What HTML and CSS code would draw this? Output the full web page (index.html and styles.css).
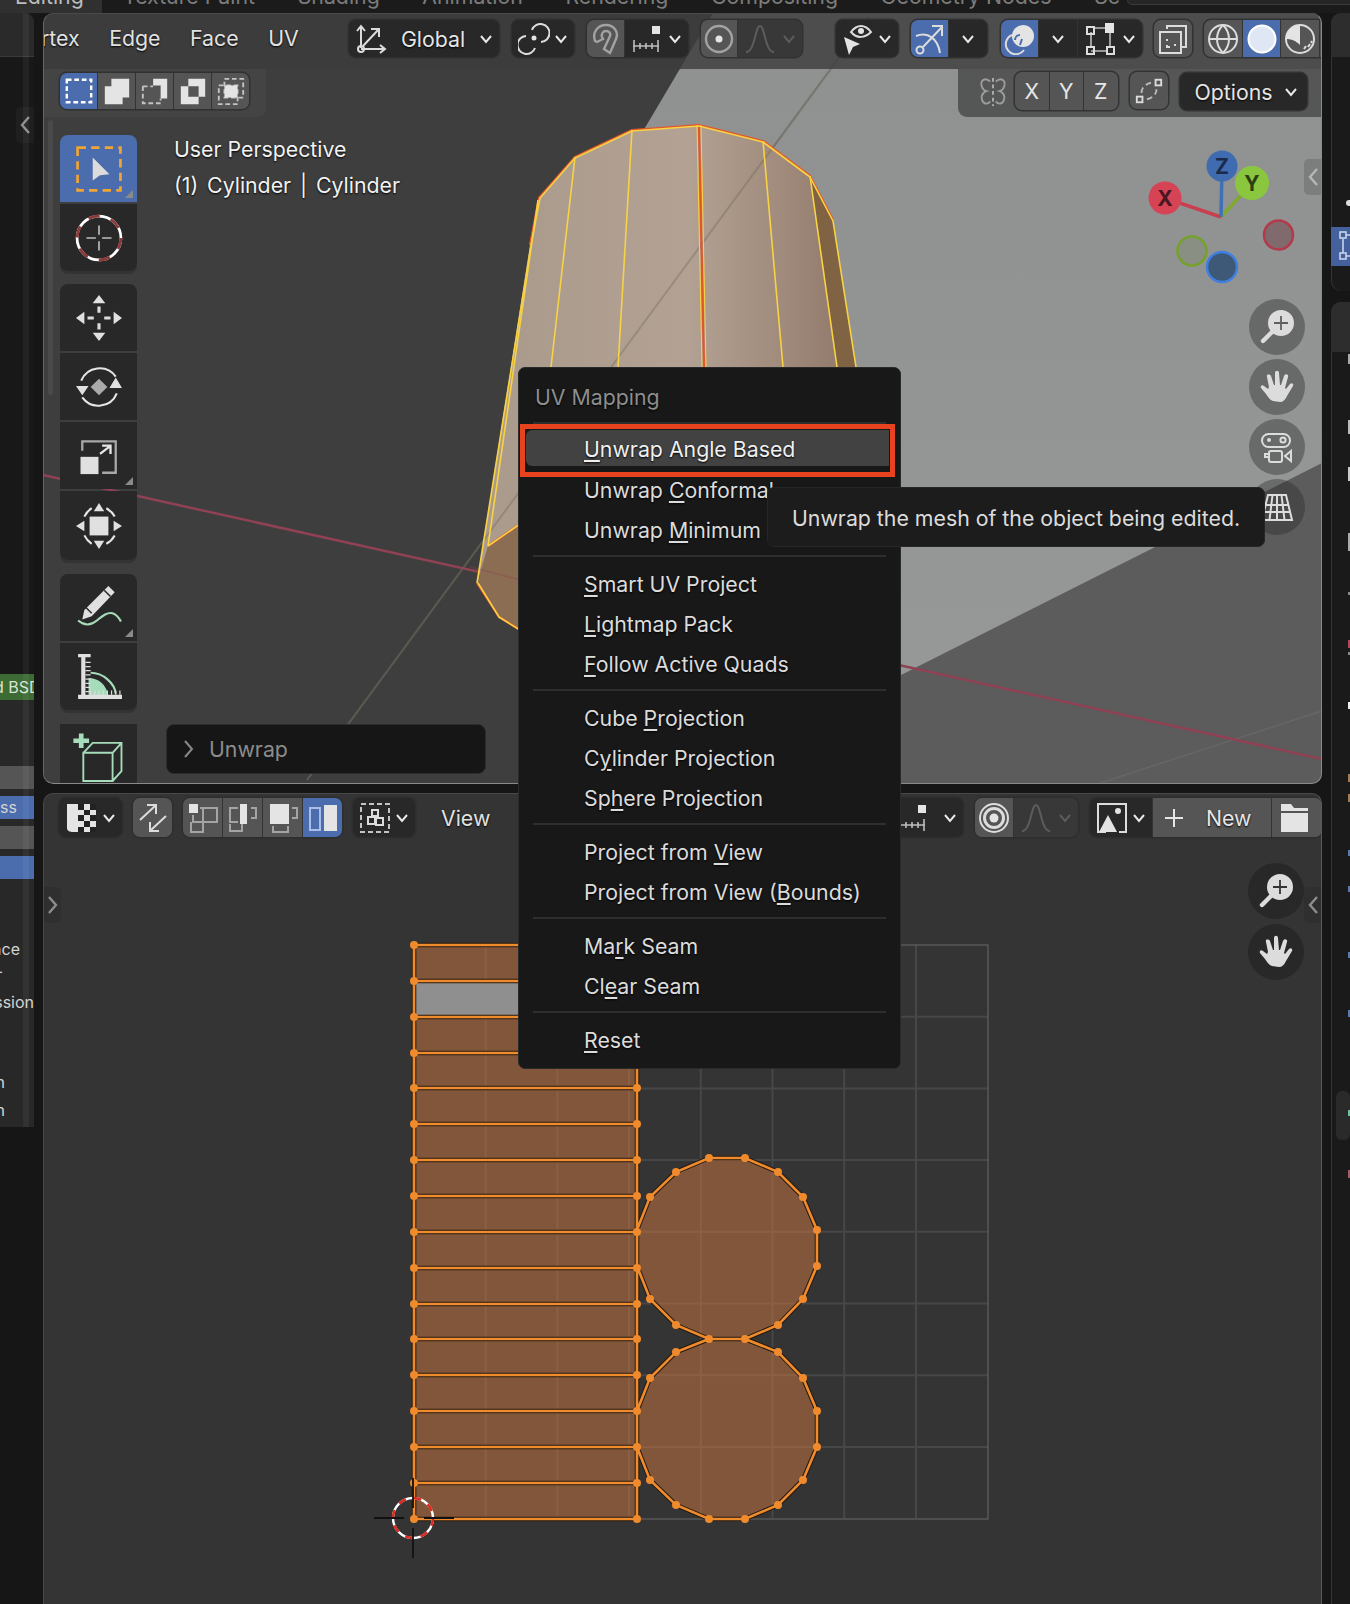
FILE: index.html
```html
<!DOCTYPE html>
<html lang="en">
<head>
<meta charset="utf-8">
<title>UV Mapping</title>
<link rel="stylesheet" href="styles.css">
</head>
<body>
<div class="tabs">
  <span class="tab on">Editing</span><span class="tab">Texture Paint</span><span class="tab">Shading</span><span class="tab">Animation</span><span class="tab">Rendering</span><span class="tab">Compositing</span><span class="tab">Geometry Nodes</span><span class="tab">Sc</span>
  <span class="scene-box"></span>
</div>
<div class="main">
  <aside class="lpanel">
    <div class="lp-head"></div>
    <div class="lp-arrow"><svg class="chev-big" viewBox="0 0 12 20"><path d="M10 2 3 10l7 8"/></svg></div>
    <div class="lp-node">d BSDF</div>
    <div class="lp-body">
      <div class="lp-row grey"></div>
      <div class="lp-row blue">ss</div>
      <div class="lp-row grey"></div>
      <div class="lp-row blue"></div>
      <div class="lp-txt t1">ace</div>
      <div class="lp-txt t2">-</div>
      <div class="lp-txt t3">ssion</div>
      <div class="lp-txt t4">n</div>
      <div class="lp-txt t5">n</div>
    </div>
    <div class="lp-scroll"></div>
  </aside>

  <div class="center">
    <section class="view3d">
      <svg class="scene" viewBox="43 13 1279 771" aria-hidden="true">
        <defs>
          <linearGradient id="plane" x1="0" y1="0" x2="0" y2="1"><stop offset="0" stop-color="#8f9191"/><stop offset="1" stop-color="#989a9a"/></linearGradient>
          <linearGradient id="body" gradientUnits="userSpaceOnUse" x1="520" y1="0" x2="850" y2="0"><stop offset="0" stop-color="#ab9b8d"/><stop offset=".5" stop-color="#b3a294"/><stop offset=".78" stop-color="#a18c7d"/><stop offset="1" stop-color="#90786a"/></linearGradient>
        </defs>
        <polygon points="530,322 530,784 1322,784 1322,460 1000,460" fill="#5c5c5c"/>
        <polygon points="713,13 1322,13 1322,463 901,675 530,860 530,322" fill="url(#plane)"/>
        <path d="M1322 711 1097 784" stroke="#666" stroke-width="1.5" fill="none"/>
        <path d="M869 17 307 780" stroke="#6a6a66" stroke-opacity=".48" stroke-width="2" fill="none"/>
        <path d="M43 475 1322 759" stroke="#8f4253" stroke-width="2.5" fill="none"/>
        <polygon points="530,245 539,198 575,157 632,130 699,125 763,141 810,176 833,220 856,367 880,560 518,629 499,617 477,583" fill="url(#body)"/>
        <path d="M869 17 307 780" stroke="#6a6450" stroke-opacity=".35" stroke-width="2" fill="none"/>
        <polygon points="810,176 833,220 856,367 880,560 850,560 837,367" fill="#7f6342"/>
        <polygon points="477,583 488,546 540,510 540,640 518,629 499,617" fill="#8a6d52"/>
        <path d="M470 567 540 585" stroke="#8f4253" stroke-opacity=".35" stroke-width="1.5" fill="none"/>
        <g fill="none" stroke="#e2562c" stroke-width="2.2" stroke-linejoin="round">
          <path d="M530 245 539 198 575 157 632 130 699 125 763 141 810 176 833 220"/>
          <path d="M477 583 499 617 520 630M488 546 520 524"/>
          <path d="M699 125 704 367"/>
        </g>
        <g fill="none" stroke="#f8d244" stroke-width="1.6" stroke-linejoin="round">
          <path d="M477 583 531 245 540 198 575 158 632 131 699 126 763 142 810 177 833 221 856 367"/>
          <path d="M478 583 499 617 520 630M488 546 520 524"/>
          <path d="M575 157 551 367M632 130 618 367M763 141 783 367M810 176 837 367M538 200 488 546"/>
          <path d="M697 125 702 367M701 125 706 367" stroke-width="1"/>
        </g>
        <g fill="none" stroke-width="3.5">
          <path d="M1221 217 1165 198" stroke="#c8404f"/>
          <path d="M1221 217 1252 183" stroke="#7fa92f"/>
          <path d="M1221 217 1222 166" stroke="#3f70b8"/>
        </g>
        <circle cx="1278.5" cy="235" r="14.5" fill="#806a6e" stroke="#b23a4a" stroke-width="2.5"/>
        <circle cx="1192" cy="251" r="14.5" fill="#8a8f83" stroke="#76a02c" stroke-width="2.5"/>
        <circle cx="1222" cy="267" r="15" fill="#3e5878" stroke="#3f7fe0" stroke-width="2.5"/>
        <circle cx="1222" cy="166" r="15.5" fill="#3f6cb0"/>
        <circle cx="1252" cy="183" r="17" fill="#8bc63f"/>
        <circle cx="1165" cy="198" r="16.5" fill="#d64355"/>
        <g class="axis">
          <text x="1222" y="174" fill="#1b2a48">Z</text>
          <text x="1252" y="191" fill="#2c3f10">Y</text>
          <text x="1165" y="206" fill="#4b1620">X</text>
        </g>
      </svg>

      <header class="hdr">
        <nav class="menus"><span>rtex</span><span>Edge</span><span>Face</span><span>UV</span></nav>
        <div class="grp w150 dark spread">
          <svg class="ic" viewBox="0 0 32 32"><path d="M6 25V4M2 8l4-5 4 5M6 26h23M25 22l5 4-5 4M8 23 24 6M16 6h8v8"/><circle cx="6" cy="26" r="3"/></svg>
          <span class="lbl">Global</span>
          <svg class="chev" viewBox="0 0 14 14"><path d="m2 4 5 6 5-6"/></svg>
        </div>
        <div class="grp w62 dark spread m13">
          <svg class="ic" viewBox="0 0 32 32"><path d="M14 7a9 9 0 1 1 9 12M17 25A9 9 0 1 1 8 13"/><circle class="fillw" cx="16" cy="15" r="2.5"/></svg>
          <svg class="chev" viewBox="0 0 14 14"><path d="m2 4 5 6 5-6"/></svg>
        </div>
        <div class="grp m13">
          <div class="cell grey w37"><svg class="ic mute" viewBox="0 0 32 32"><path d="M5 18C2 9 8 2 16 2c8 0 13 7 10 14l-6 14-6-4 6-13c1-3-1-5-4-5s-5 3-4 6l1 2-6 3z"/></svg></div>
          <div class="cell dark w63 spread1">
            <svg class="ic" viewBox="0 0 32 32"><path class="thin" d="M2 23h26M3 17v12M9 20v6M15 20v6M21 20v6M27 17v12"/><rect class="fillw" x="21" y="3" width="8" height="8"/></svg>
            <svg class="chev" viewBox="0 0 14 14"><path d="m2 4 5 6 5-6"/></svg>
          </div>
        </div>
        <div class="grp m13">
          <div class="cell grey w36"><svg class="ic mute" viewBox="0 0 32 32"><circle cx="16" cy="16" r="13"/><circle class="fillw" cx="16" cy="16" r="3.5"/></svg></div>
          <div class="cell dim w64 spread1">
            <svg class="ic off" viewBox="0 0 32 32"><path d="M2 29c9 0 9-26 14-26s5 26 14 26"/></svg>
            <svg class="chev off" viewBox="0 0 14 14"><path d="m2 4 5 6 5-6"/></svg>
          </div>
        </div>
        <div class="grp w62 dark spread m34">
          <svg class="ic" viewBox="0 0 32 32"><path class="fillw" d="M2 14l16 7-7 3-4 8z"/><path d="M9 9c6-8 14-8 20 0-6 6-14 7-20 0z"/><circle class="fillw" cx="19" cy="8" r="3"/></svg>
          <svg class="chev" viewBox="0 0 14 14"><path d="m2 4 5 6 5-6"/></svg>
        </div>
        <div class="grp m13">
          <div class="cell blue w37"><svg class="ic" viewBox="0 0 32 32"><path d="M2 13C14 8 24 16 26 30M9 24 28 4M18 3h10v10"/><circle cx="6" cy="27" r="3.5"/></svg></div>
          <div class="cell dark w38"><svg class="chev" viewBox="0 0 14 14"><path d="m2 4 5 6 5-6"/></svg></div>
        </div>
        <div class="grp m14">
          <div class="cell blue w37"><svg class="ic" viewBox="0 0 32 32"><circle class="fillw" cx="19" cy="13" r="11"/><path d="M20 27A10 10 0 1 1 8 12"/><path class="cut" d="M11 17a5 5 0 0 1 5-5M16 22l2-6"/></svg></div>
          <div class="cell dark w38"><svg class="chev" viewBox="0 0 14 14"><path d="m2 4 5 6 5-6"/></svg></div>
          <div class="cell dark w64 spread1">
            <svg class="ic" viewBox="0 0 32 32"><path class="thin" d="M7 9v15M11 5h11M7 28h15M26 9v15" /><rect x="3" y="4" width="7" height="7"/><rect x="3" y="24" width="7" height="7"/><rect x="23" y="24" width="7" height="7"/><rect class="fillw" x="21" y="0" width="9" height="10"/></svg>
            <svg class="chev" viewBox="0 0 14 14"><path d="m2 4 5 6 5-6"/></svg>
          </div>
        </div>
        <div class="grp m12">
          <div class="cell grey w38"><svg class="ic" viewBox="0 0 32 32"><path d="M10 6V3h19v21h-5"/><rect x="3" y="9" width="21" height="21"/><path class="cut2" d="M10 16v2M10 22v2h3M17 22h2"/></svg></div>
        </div>
        <div class="grp m12 tail">
          <div class="cell grey w38"><svg class="ic" viewBox="0 0 32 32"><circle cx="16" cy="16" r="14"/><path d="M2 16h28M16 2c-8 8-8 20 0 28M16 2c8 8 8 20 0 28"/></svg></div>
          <div class="cell blue w37"><svg class="ic" viewBox="0 0 32 32"><circle cx="16" cy="16" r="13.5" fill="#dfe6f4" stroke="#fff"/></svg></div>
          <div class="cell grey w38"><svg class="ic" viewBox="0 0 32 32"><circle cx="16" cy="16" r="14"/><path class="fillw" d="M16 2a14 14 0 0 0-14 14c6 0 10 2 14 6z"/><path d="M20 26l2-3M24 24l2-3M27 20l1-2"/></svg></div>
          <div class="cell grey w5"></div>
        </div>
      </header>

      <div class="toolrow">
        <div class="strip-l">
          <div class="grp">
            <div class="cell blue w37 h36"><svg class="ic sm" viewBox="0 0 32 32"><rect class="dash" x="3" y="4" width="26" height="24"/></svg></div>
            <div class="cell grey w37 h36"><svg class="ic sm" viewBox="0 0 32 32"><path class="fillw" d="M10 3h19v20h-7v7H3V11h7z"/></svg></div>
            <div class="cell grey w37 h36"><svg class="ic sm" viewBox="0 0 32 32"><path class="fillw" d="M14 3h15v21H22V10h-8z"/><path class="dashg" d="M3 11h11M3 11v18h19v-5"/></svg></div>
            <div class="cell grey w37 h36"><svg class="ic sm" viewBox="0 0 32 32"><path class="fillw" fill-rule="evenodd" d="M11 3h18v19h-7v8H3V11h8zM11 11v11h11V11z"/></svg></div>
            <div class="cell grey w37 h36"><svg class="ic sm" viewBox="0 0 32 32"><rect class="dashg" x="9" y="3" width="20" height="20"/><rect class="dashg" x="3" y="10" width="20" height="20"/><rect class="fillw" x="9" y="10" width="14" height="13"/></svg></div>
          </div>
        </div>
        <div class="strip-r">
          <svg class="ic mirror" viewBox="0 0 32 32"><path class="mute-s" d="M13 5C8 0 2 3 4 10c1 4 5 5 5 5s-6 2-5 8 6 7 9 3M19 5c5-5 11-2 9 5-1 4-5 5-5 5s6 2 5 8-6 7-9 3"/><path class="dashv" d="M16 1v30"/></svg>
          <div class="grp xyz"><div class="cell grey w34">X</div><div class="cell grey w34">Y</div><div class="cell grey w34">Z</div></div>
          <div class="grp m12"><div class="cell grey w38 h37"><svg class="ic sm" viewBox="0 0 32 32"><rect x="3" y="22" width="6" height="6"/><rect x="23" y="4" width="6" height="6"/><path class="dasht" d="M8 18c0-6 5-10 11-11M24 14c0 6-5 10-11 11"/></svg></div></div>
          <div class="grp dark opts m12"><span class="lbl">Options</span><svg class="chev" viewBox="0 0 14 14"><path d="m2 4 5 6 5-6"/></svg></div>
        </div>
      </div>

      <div class="vbody">
        <div class="toolbar">
          <div class="tgroup">
            <div class="tool on corner"><svg class="tic" viewBox="0 0 44 44"><rect x="1.5" y="1.5" width="41" height="41" fill="none" stroke="#f0a533" stroke-width="2.6" stroke-dasharray="8 5"/><path d="M16 11 32 27l-9 1-7 5z" fill="#dcdcdc"/></svg></div>
            <div class="tool"><svg class="tic" viewBox="0 0 44 44"><circle cx="22" cy="22" r="21" fill="none" stroke="#fff" stroke-width="2.6"/><circle cx="22" cy="22" r="21" fill="none" stroke="#8a3a3a" stroke-width="2.8" stroke-dasharray="11 11"/><path d="M22 10v9M22 25v9M10 22h9M25 22h9" stroke="#bdbdbd" stroke-width="1.6"/></svg></div>
          </div>
          <div class="tgroup">
            <div class="tool"><svg class="tic" viewBox="0 0 44 44"><path class="f" d="M22 0l-6 8h12zM22 44l-6-8h12zM0 22l8-6v12zM44 22l-8-6v12z"/><path d="M22 11v6M22 27v6M11 22h6M27 22h6" stroke="#dcdcdc" stroke-width="3"/></svg></div>
            <div class="tool"><svg class="tic" viewBox="0 0 44 44"><path d="M5 16A19 19 0 0 1 38 12M39 28A19 19 0 0 1 6 32" fill="none" stroke="#e6e6e6" stroke-width="2"/><path class="f" d="M0 21h12l-6 9zM44 23H32l6-10z"/><path d="M22 14l8 8-8 8-8-8z" fill="#aaa"/></svg></div>
            <div class="tool corner"><svg class="tic" viewBox="0 0 44 44"><path d="M6 17V8h32v30H25" fill="none" stroke="#a8a8a8" stroke-width="2.2"/><rect class="f" x="4.300" y="22.800" width="17.200" height="16.500"/><path d="M23 20 32 13M25 12h8v8" fill="none" stroke="#e6e6e6" stroke-width="2.2"/></svg></div>
            <div class="tool tall"><svg class="tic" viewBox="0 0 44 44"><path d="M8 13A20 20 0 0 1 15 5M29 5a20 20 0 0 1 8 8M37 31a20 20 0 0 1-8 8M15 39a20 20 0 0 1-7-8" fill="none" stroke="#e6e6e6" stroke-width="2"/><path class="f" d="M22 0l-5 8h10zM22 44l-5-8h10zM0 22l8-5v10zM44 22l-8-5v10z"/><rect class="f" x="13" y="13" width="18" height="18"/></svg></div>
          </div>
          <div class="tgroup">
            <div class="tool corner"><svg class="tic" viewBox="0 0 44 44"><path class="f" d="M31 1l6 6-22 23-9 3 2-9z"/><path d="M27 5l6 6M9 21l6 6" stroke="#282828" stroke-width="1.4" fill="none"/><path d="M2 34c6 5 12 5 18 0 6-5 10-8 15-7 3 1 6 4 8 8" fill="none" stroke="#a6dcb8" stroke-width="2"/></svg></div>
            <div class="tool"><svg class="tic" viewBox="0 0 44 44"><path d="M12 23c9 0 17 6 19 17H12z" fill="#a5dcb9"/><path d="M14 18c12 0 23 10 24 20" fill="none" stroke="#a5dcb9" stroke-width="2"/><path class="f" d="M2 0h12v3H9v36h35v4H2v-4h3V3H2z"/><path d="M9 8h5M9 12h5M9 16h5M9 20h5M9 24h5M9 28h5M9 32h5M9 36h5M14 39v-4M18 39v-4M22 39v-4M26 39v-4M30 39v-4M34 39v-4M38 39v-4M42 39v-4" stroke="#dcdcdc" stroke-width="1.2"/></svg></div>
          </div>
          <div class="tgroup">
            <div class="tool"><svg class="tic" viewBox="0 0 44 44"><path d="M-2.500 5.500h15M5 -1.500v14" stroke="#a5dcb9" stroke-width="4.500"/><path d="M7 17h28v27H7zM7 17l9-9.500h27.500v27L35 44M35 17l8.500-9.500" fill="none" stroke="#a5dcb9" stroke-width="1.800"/></svg></div>
          </div>
        </div>
        <div class="vinfo">
          <div class="info">User Perspective</div>
          <div class="info wide">(1) Cylinder | Cylinder</div>
          <div class="lastop"><svg class="chev-r" viewBox="0 0 12 20"><path d="M3 2l7 8-7 8"/></svg><span>Unwrap</span></div>
        </div>
      </div>

      <div class="vscroll"></div>
      <div class="side-tab light"><svg class="chev-big" viewBox="0 0 12 20"><path d="M10 2 3 10l7 8"/></svg></div>
      <div class="navs">
        <div class="nav"><svg class="nic" viewBox="0 0 34 34"><circle class="nf" cx="21" cy="13" r="13"/><path d="M21 6v14M14 13h14" stroke="#5f6060" stroke-width="1.8"/><path d="M12 22 3 31" stroke="#dcdcdc" stroke-width="4.4" stroke-linecap="round"/></svg></div>
        <div class="nav"><svg class="nic" viewBox="0 0 34 34"><use href="#handicon"/></svg></div>
        <div class="nav"><svg class="nic" viewBox="0 0 34 34"><g fill="none" stroke="#dcdcdc" stroke-width="2"><rect x="2" y="4" width="28" height="13" rx="6.5"/><rect x="9" y="21" width="13" height="11" rx="2"/><path d="M9 24H5v3h4M31 21l-6 5 6 5z"/></g><circle cx="9" cy="10" r="2" fill="#dcdcdc"/><circle cx="23" cy="10" r="2.6" fill="none" stroke="#dcdcdc" stroke-width="2"/></svg></div>
        <div class="nav"><svg class="nic" viewBox="0 0 34 34"><path d="M8 5h18l6 25H2zM17 5v25M12.500 5 9.500 30M21.500 5 24.500 30M5.500 15h23M4 22h26" fill="none" stroke="#dcdcdc" stroke-width="2"/></svg></div>
      </div>
    </section>

    <section class="uv">
      <svg class="uvcanvas" viewBox="43 793 1279 811" aria-hidden="true">
        <defs>
          <path id="uvedges" d="M414 945V1519M637 945V1519M414 945H637M414 981H637M414 1017H637M414 1053H637M414 1088H637M414 1124H637M414 1160H637M414 1196H637M414 1232H637M414 1268H637M414 1304H637M414 1339H637M414 1375H637M414 1411H637M414 1447H637M414 1483H637M414 1519H637M709 1158H745L778 1172 803 1197 817 1230V1266L803 1299 778 1325 745 1339H709L676 1325 650 1299 637 1266V1230L650 1197 676 1172zM745 1339 778 1352 803 1378 817 1411V1447L803 1480 778 1505 745 1519H709L676 1505 650 1480 637 1447V1411L650 1378 676 1352 709 1339"/>
        </defs>
        <g stroke="#474747" stroke-width="2" fill="none">
          <path d="M485.700 945V1518M557.400 945V1518M629 945V1518M700.800 945V1518M772.500 945V1518M844.200 945V1518M916 945V1518M414 1016.700H988M414 1088.400H988M414 1160H988M414 1231.800H988M414 1303.500H988M414 1375.200H988M414 1447H988"/>
        </g>
        <rect x="414" y="945" width="574" height="574" fill="none" stroke="#686868" stroke-width="1"/>
        <path class="uvface" d="M414 945H637V1519H414z"/>
        <path class="uvface" d="M709 1158H745L778 1172 803 1197 817 1230V1266L803 1299 778 1325 745 1339H709L676 1325 650 1299 637 1266V1230L650 1197 676 1172z"/>
        <path class="uvface" d="M745 1339 778 1352 803 1378 817 1411V1447L803 1480 778 1505 745 1519H709L676 1505 650 1480 637 1447V1411L650 1378 676 1352 709 1339z"/>
        <rect x="414" y="981" width="223" height="36" fill="#8f8f8f"/>
        <use href="#uvedges" class="edge-dark"/>
        <use href="#uvedges" class="edge-orange"/>
        <path class="uvverts" d="M414 945h0M414 981h0M414 1017h0M414 1053h0M414 1088h0M414 1124h0M414 1160h0M414 1196h0M414 1232h0M414 1268h0M414 1304h0M414 1339h0M414 1375h0M414 1411h0M414 1447h0M414 1483h0M414 1519h0M637 945h0M637 981h0M637 1017h0M637 1053h0M637 1088h0M637 1124h0M637 1160h0M637 1196h0M637 1232h0M637 1268h0M637 1304h0M637 1339h0M637 1375h0M637 1411h0M637 1447h0M637 1483h0M637 1519h0M709 1158h0M745 1158h0M778 1172h0M803 1197h0M817 1230h0M817 1266h0M803 1299h0M778 1325h0M745 1339h0M709 1339h0M676 1325h0M650 1299h0M650 1197h0M676 1172h0M778 1352h0M803 1378h0M817 1411h0M817 1447h0M803 1480h0M778 1505h0M745 1519h0M709 1519h0M676 1505h0M650 1480h0M650 1378h0M676 1352h0"/>
        <circle cx="413" cy="1518" r="20" fill="none" stroke="#fff" stroke-width="2.400"/>
        <circle cx="413" cy="1518" r="20" fill="none" stroke="#dc2a22" stroke-width="2.600" stroke-dasharray="7.850 7.850"/>
        <path d="M374 1518H404M424 1518H454M413 1478V1508M413 1528V1558" stroke="#111" stroke-width="1.800" fill="none"/>
      </svg>

      <header class="hdr uvhdr">
        <div class="grp w63 dark spread">
          <svg class="ic" viewBox="0 0 32 32"><path class="fillw" d="M2 2h29v28H8c-3 0-6-1-6-4z"/><path d="M13 2h6v6h-6zM25 2h6v6h-6zM19 8h6v5h-6zM13 13h6v6h-6zM25 13h6v6h-6zM19 19h6v6h-6zM13 25h6v5h-6zM25 25h6v5h-6z" fill="#222" stroke="none"/></svg>
          <svg class="chev" viewBox="0 0 14 14"><path d="m2 4 5 6 5-6"/></svg>
        </div>
        <div class="grp m11"><div class="cell grey w39 h39"><svg class="ic" viewBox="0 0 32 32"><path d="M3 18 18 4M10 3h9v9M29 14 14 28M22 29h-9v-9"/></svg></div></div>
        <div class="grp m11 modes">
          <div class="cell grey w39 h39"><svg class="ic" viewBox="0 0 32 32"><rect class="fillw" x="2" y="2" width="9" height="9"/><path class="thinm" d="M13 6h17v14H6V13M16 6v24H4V20"/></svg></div>
          <div class="cell grey w39 h39"><svg class="ic" viewBox="0 0 32 32"><rect class="fillw" x="13" y="2" width="7" height="20"/><path class="thinm" d="M11 6H3v14h8M24 6h5v10h-5M3 22v7h12v-7"/></svg></div>
          <div class="cell grey w39 h39"><svg class="ic" viewBox="0 0 32 32"><rect class="fillw" x="3" y="2" width="19" height="20"/><path class="thinm" d="M25 6h5v10h-5M6 24v6h15v-6"/></svg></div>
          <div class="cell blue w39 h39"><svg class="ic" viewBox="0 0 32 32"><rect x="3" y="6" width="10" height="22" class="blueline"/><rect class="fillw" x="17" y="3" width="13" height="26"/></svg></div>
        </div>
        <div class="grp w62 dark spread m11">
          <svg class="ic" viewBox="0 0 32 32"><rect class="dashg" x="2" y="2" width="28" height="28"/><rect x="13" y="8" width="6" height="6"/><rect x="9" y="15" width="7" height="7"/><rect x="17" y="16" width="7" height="7"/></svg>
          <svg class="chev" viewBox="0 0 14 14"><path d="m2 4 5 6 5-6"/></svg>
        </div>
        <span class="uvview">View</span>
        <div class="uvright">
          <div class="grp dark w83 spreadr">
            <svg class="ic" viewBox="0 0 32 32"><path class="thin" d="M2 23h26M3 17v12M9 20v6M15 20v6M21 20v6M27 17v12"/><rect class="fillw" x="21" y="3" width="8" height="8"/></svg>
            <svg class="chev" viewBox="0 0 14 14"><path d="m2 4 5 6 5-6"/></svg>
          </div>
          <div class="grp m12">
            <div class="cell grey w38 h39"><svg class="ic" viewBox="0 0 32 32"><circle cx="16" cy="16" r="14"/><circle cx="16" cy="16" r="9.500" stroke-width="3"/><circle class="fillm" cx="16" cy="16" r="4.500"/></svg></div>
            <div class="cell dim w64 h39 spread1">
              <svg class="ic off" viewBox="0 0 32 32"><path d="M2 29c9 0 9-26 14-26s5 26 14 26"/></svg>
              <svg class="chev off" viewBox="0 0 14 14"><path d="m2 4 5 6 5-6"/></svg>
            </div>
          </div>
          <div class="grp m12">
            <div class="cell dark w62 h39 spread1">
              <svg class="ic" viewBox="0 0 32 32"><path d="M10 30H2V2h28v28h-7"/><path class="fillw" d="M3 30 12 13l9 17z"/><circle class="fillw" cx="22" cy="9" r="3"/></svg>
              <svg class="chev" viewBox="0 0 14 14"><path d="m2 4 5 6 5-6"/></svg>
            </div>
            <div class="cell grey newb h39"><svg class="plus" viewBox="0 0 20 20"><path d="M10 1v18M1 10h18"/></svg><span class="lbl">New</span></div>
            <div class="cell grey w50 h39"><svg class="ic" viewBox="0 0 32 32"><path class="fillw" d="M3 2h10l3 4h14v3H3zM3 11h27v19H3z"/></svg></div>
          </div>
        </div>
      </header>

      <div class="side-tab uvl"><svg class="chev-big" viewBox="0 0 12 20"><path d="M3 2l7 8-7 8"/></svg></div>
      <div class="side-tab uvr"><svg class="chev-big" viewBox="0 0 12 20"><path d="M10 2 3 10l7 8"/></svg></div>
      <div class="navs uvnavs">
        <div class="nav"><svg class="nic" viewBox="0 0 34 34"><circle class="nf" cx="21" cy="13" r="13"/><path d="M21 6v14M14 13h14" stroke="#333" stroke-width="1.8"/><path d="M12 22 3 31" stroke="#dcdcdc" stroke-width="4.400" stroke-linecap="round"/></svg></div>
        <div class="nav"><svg class="nic" viewBox="0 0 34 34"><use href="#handicon"/></svg></div>
      </div>
    </section>
  </div>

  <aside class="rpanel">
    <div class="rp-top">
      <div class="rp-head"></div>
      <div class="rp-dot"></div>
      <div class="rp-sel"><svg class="rp-ic" viewBox="0 0 19 30"><path d="M5 8v14M8 4h10M8 25h10" stroke="#c9d4ea" stroke-width="1.6" fill="none"/><rect x="2" y="1" width="6" height="6" fill="none" stroke="#c9d4ea" stroke-width="1.6"/><rect x="2" y="22" width="6" height="6" fill="none" stroke="#c9d4ea" stroke-width="1.6"/></svg></div>
    </div>
    <div class="rp-bottom">
      <div class="rp-head tall"></div>
      <svg class="rp-marks" viewBox="0 0 19 1252" aria-hidden="true">
        <g>
          <rect x="17" y="52" width="2" height="10" fill="#aaa"/>
          <rect x="17" y="118" width="2" height="14" fill="#bbb"/>
          <rect x="17" y="165" width="2" height="14" fill="#ccc"/>
          <rect x="17" y="231" width="2" height="18" fill="#aaa"/>
          <rect x="17" y="290" width="2" height="3" fill="#888"/>
          <rect x="17" y="338" width="2" height="8" fill="#b0485a"/>
          <rect x="17" y="350" width="2" height="3" fill="#888"/>
          <rect x="17" y="400" width="2" height="7" fill="#eee"/>
          <rect x="17" y="472" width="2" height="8" fill="#a07c58"/>
          <rect x="17" y="492" width="2" height="8" fill="#a07c58"/>
          <rect x="17" y="548" width="2" height="6" fill="#5f78b0"/>
          <rect x="17" y="584" width="2" height="6" fill="#5f78b0"/>
          <rect x="17" y="650" width="2" height="6" fill="#5f78b0"/>
          <rect x="17" y="708" width="2" height="7" fill="#5f78b0"/>
          <rect x="5" y="789" width="14" height="49" rx="6" fill="#2a2a2a"/>
          <rect x="17" y="808" width="2" height="6" fill="#6fc39a"/>
          <rect x="17" y="868" width="2" height="8" fill="#a85a6a"/>
        </g>
      </svg>
    </div>
  </aside>
</div>

<svg class="sprite" aria-hidden="true"><defs><g id="handicon"><path d="M13 31c-3-1-5-4-7-7l-5-6c-1-2 1-4 3-2l4 3 1-2L7 7c-1-3 3-3 4-1l3 9 1 0L15 3c0-3 4-3 4 0l1 12h1l3-9c1-3 5-2 4 1l-3 11 1 1 4-5c2-2 4 0 3 2l-6 10c-2 4-4 6-7 6z" fill="#dcdcdc"/></g></defs></svg>

<div class="menu">
  <div class="m-title">UV Mapping</div>
  <div class="m-sep first"></div>
  <div class="m-item hot"><u>U</u>nwrap Angle Based</div>
  <div class="m-item">Unwrap <u>C</u>onformal</div>
  <div class="m-item">Unwrap <u>M</u>inimum</div>
  <div class="m-sep"></div>
  <div class="m-item"><u>S</u>mart UV Project</div>
  <div class="m-item"><u>L</u>ightmap Pack</div>
  <div class="m-item"><u>F</u>ollow Active Quads</div>
  <div class="m-sep"></div>
  <div class="m-item">Cube <u>P</u>rojection</div>
  <div class="m-item">C<u>y</u>linder Projection</div>
  <div class="m-item">Sp<u>h</u>ere Projection</div>
  <div class="m-sep"></div>
  <div class="m-item">Project from <u>V</u>iew</div>
  <div class="m-item">Project from View (<u>B</u>ounds)</div>
  <div class="m-sep"></div>
  <div class="m-item">Ma<u>r</u>k Seam</div>
  <div class="m-item">Cl<u>e</u>ar Seam</div>
  <div class="m-sep"></div>
  <div class="m-item"><u>R</u>eset</div>
  <div class="m-mark"></div>
</div>
<div class="tip">Unwrap the mesh of the object being edited.</div>
</body>
</html>
```

FILE: styles.css
```css
* { box-sizing: border-box; }
html, body { margin: 0; padding: 0; }
body {
  position: relative;
  width: 1350px;
  height: 1604px;
  overflow: hidden;
  background: #161616;
  color: #e4e4e4;
  font: 21.3px/1.2 Inter, "Liberation Sans", sans-serif;
}
svg { display: block; }
.sprite { width: 0; height: 0; position: absolute; }

/* top tabs */
.tabs { position: relative; display: flex; height: 13px; overflow: hidden; background: #1b1b1b; }
.tab { margin-top: -21px; height: 34px; padding: 4px 21.3px 0; color: #7c7c7c; white-space: nowrap; flex: none; line-height: 27px; }
.tab.on { background: #303030; color: #bdbdbd; padding-left: 15px; padding-right: 18px; }
.scene-box { position: absolute; left: 1127px; top: -10px; width: 240px; height: 15px; border: 1px solid #3a3a3a; border-radius: 5px; background: #262626; }

.main { display: grid; grid-template-columns: 34px 1279px 19px; column-gap: 9px; height: 1591px; }

/* left panel */
.lpanel { position: relative; height: 1114px; background: #181818; overflow: hidden; font-size: 16px; color: #d4d4d4; }
.lp-head { height: 44px; background: #2a2a2a; border-bottom: 1px solid #3a3a3a; border-top-right-radius: 9px; }
.lp-arrow { width: 18px; height: 36px; margin: 50px 0 0 16px; background: #1f1f1f; display: flex; align-items: center; justify-content: center; border-radius: 5px 0 0 5px; }
.lp-node { height: 26px; margin-top: 531px; text-indent: -6px; background: #3c6b34; color: #d8e4d4; line-height: 26px; white-space: nowrap; overflow: hidden; }
.lp-body { height: 427px; background: #282828; padding-top: 66px; overflow: hidden; }
.lp-row { height: 23px; margin-bottom: 7px; line-height: 23px; }
.lp-row.grey { background: #555; }
.lp-row.blue { background: #4b6cad; }
.lp-txt { height: 18px; margin-left: -40px; line-height: 18px; white-space: nowrap; text-align: right; }
.t1 { margin-top: 61px; padding-right: 14px; }
.t2 { margin-top: 4px; padding-right: 31px; }
.t3 { margin-top: 13px; }
.t4 { margin-top: 62px; padding-right: 29px; }
.t5 { margin-top: 10px; padding-right: 29px; }
.lp-scroll { position: absolute; left: 23px; top: 0; bottom: 0; width: 6px; background: rgba(255,255,255,.05); }
.chev-big { width: 12px; height: 20px; fill: none; stroke: #8d8d8d; stroke-width: 2.4; }

.center { display: flex; flex-direction: column; gap: 9px; min-width: 0; }

/* 3D viewport */
.view3d { position: relative; height: 771px; background: #3e3e3e; border-radius: 10px; overflow: hidden; display: flex; flex-direction: column; }
.view3d::after { content: ""; position: absolute; inset: 0; border: 1.5px solid #5a5a5a; border-top-color: #4a4a4a; border-right-color: #8a8a8a; border-bottom-color: #8a8a8a; border-left-color: #666; border-radius: 10px; pointer-events: none; }
.scene { position: absolute; left: 0; top: 0; width: 1279px; height: 771px; }
.axis text { text-anchor: middle; font-weight: 700; font-size: 21px; }
.vscroll { position: absolute; left: 5px; top: 107px; width: 5px; height: 275px; border-radius: 3px; background: #4a4a4a; }

/* headers */
.hdr { position: relative; display: flex; align-items: flex-start; height: 56px; padding-top: 7px; background: rgba(60,60,60,.8); flex: none; }
.menus { display: flex; gap: 29.5px; width: 308px; height: 37px; margin-left: -2px; line-height: 36px; flex: none; color: #e2e2e2; text-shadow: 0 1px 2px #000; }
.grp { display: flex; gap: 1px; height: 37px; border-radius: 7px; overflow: hidden; background: #333; box-shadow: 0 0 0 1.5px rgba(46,46,46,.85); flex: none; align-items: stretch; }
.grp.dark { background: #282828; }
.dark { background: #282828; }
.cell { display: flex; align-items: center; justify-content: center; flex: none; height: 37px; color: #e6e6e6; }
.grey { background: #555; }
.blue { background: #4b6cad; }
.dim { background: #383838; }
.w5 { width: 4px; } .w34 { width: 33.500px; } .w36 { width: 36px; } .w37 { width: 37px; } .w38 { width: 38px; } .w39 { width: 39px; }
.w50 { width: 50px; justify-content: flex-start; padding-left: 6px; }
.w62 { width: 62px; } .w63 { width: 63px; } .w64 { width: 64px; } .w65 { width: 65px; } .w83 { width: 83px; } .w150 { width: 150px; }
.h36 { height: 36px; } .h37 { height: 37px; } .h39 { height: 39px; }
.m11 { margin-left: 11px; } .m12 { margin-left: 12px; } .m13 { margin-left: 13px; } .m14 { margin-left: 14px; } .m34 { margin-left: 34px; }
.spread, .spread1, .spreadr, .opts { align-items: center; justify-content: space-between; padding: 0 6px 0 6px; }
.spreadr { padding-left: 17px; }
.lbl { color: #e6e6e6; line-height: 36px; text-shadow: 0 1px 2px #000; }
.ic { width: 32px; height: 32px; fill: none; stroke: #dcdcdc; stroke-width: 2; flex: none; }
.ic.sm { width: 30px; height: 30px; }
.ic .fillw { fill: #e4e4e4; stroke: none; }
.ic .fillm { fill: #e4e4e4; stroke: none; }
.ic .thin { stroke: #bdbdbd; stroke-width: 1.6; }
.ic .thinm { stroke: #a4a4a4; stroke-width: 2; }
.ic .blueline { stroke: #a9bde6; }
.ic.mute { stroke: #a2a2a2; stroke-width: 2.4; }
.ic.off { stroke: #5c5c5c; }
.ic .cut { stroke: #4b6cad; }
.ic .cut2 { stroke: #dcdcdc; }
.ic .dash { stroke: #fff; stroke-width: 2.6; stroke-dasharray: 5 3; }
.ic .dashg { stroke: #c4c4c4; stroke-width: 2; stroke-dasharray: 5 3; }
.ic .dashv { stroke: #b0b0b0; stroke-width: 2; stroke-dasharray: 4 3; }
.ic .mute-s { stroke: #9c9c9c; stroke-width: 2; }
.ic .dasht { stroke: #bbb; stroke-dasharray: 6 4; }
.chev { width: 14px; height: 14px; fill: none; stroke: #e8e8e8; stroke-width: 2; flex: none; }
.chev.off { stroke: #5c5c5c; }
.tail { border-radius: 7px 0 0 7px; }

/* tool settings */
.toolrow { position: relative; display: flex; justify-content: space-between; height: 48px; flex: none; }
.strip-l { width: 223px; padding: 4px 0 0 17px; background: rgba(72,72,72,.62); border-bottom-right-radius: 9px; }
.strip-l .grp { height: 36px; width: max-content; }
.strip-r { display: flex; align-items: flex-start; width: 364px; padding: 3px 0 0 20px; background: rgba(62,62,62,.72); border-bottom-left-radius: 9px; }
.mirror { width: 30px; height: 34px; margin: 3px 7px 0 0; }
.xyz { height: 38px; }
.xyz .cell { height: 38px; line-height: 36px; }
.opts { width: 127px; padding: 0 9px 0 15px; height: 37px; margin-top: 1px; }

/* body of viewport */
.vbody { position: relative; display: flex; flex: 1; min-height: 0; padding: 18px 0 0 17px; }
.toolbar { display: flex; flex-direction: column; gap: 13px; width: 77px; flex: none; }
.tgroup { display: flex; flex-direction: column; gap: 2px; border-radius: 8px; box-shadow: 0 3px 0 #333; }
.tool { position: relative; display: flex; align-items: center; justify-content: center; height: 67px; background: #282828; flex: none; }
.tool.tall { height: 69px; }
.tgroup .tool:first-child { border-radius: 8px 8px 0 0; }
.tgroup .tool:last-child { border-radius: 0 0 8px 8px; }
.tool.on { background: #4b6cad; }
.tool.corner::after { content: ""; position: absolute; right: 4px; bottom: 4px; border-style: solid; border-width: 0 0 8px 8px; border-color: transparent transparent #8a8a8a transparent; }
.tic { width: 46px; height: 46px; overflow: visible; }
.tic .f { fill: #e0e0e0; }
.tgroup:nth-child(3) { margin-top: 1px; }
.tgroup:nth-child(4) { margin-top: 1px; }

.vinfo { display: flex; flex-direction: column; flex: 1; margin-left: 29px; margin-top: -3px; padding-bottom: 10px; }
.info { height: 35px; line-height: 35px; padding-left: 8px; color: #f2f2f2; text-shadow: 0 1px 2px #000; }
.info.wide { word-spacing: 2.9px; padding-top: 1px; }
.lastop { display: flex; align-items: center; gap: 15px; width: 320px; height: 50px; margin-top: auto; padding: 2px 0 0 15px; background: #161616; border: 1px solid #2c2c2c; border-radius: 8px; color: #8c8c8c; }
.chev-r { width: 12px; height: 20px; fill: none; stroke: #8a8a8a; stroke-width: 2; margin-top: -2px; }

/* floating */
.side-tab { position: absolute; width: 18px; height: 36px; display: flex; align-items: center; justify-content: center; background: rgba(40,40,40,.35); }
.side-tab.light { right: 0; top: 146px; background: #7c7e7e; border-radius: 5px 0 0 5px; }
.side-tab.light .chev-big { stroke: #b6b6b6; }
.side-tab.uvl { left: 0; top: 94px; border-radius: 0 5px 5px 0; }
.side-tab.uvr { right: 0; top: 94px; border-radius: 5px 0 0 5px; }
.navs { position: absolute; right: 17px; top: 286px; display: flex; flex-direction: column; gap: 4px; }
.nav { width: 56px; height: 56px; border-radius: 50%; background: rgba(45,45,45,.42); display: flex; align-items: center; justify-content: center; }
.nic { width: 34px; height: 34px; }
.nf { fill: #dcdcdc; }
.uvnavs { top: 70px; right: 18px; gap: 5px; }
.uvnavs .nav { background: #282828; }

/* UV editor */
.uv { position: relative; height: 820px; background: #343434; border-radius: 10px 10px 0 0; overflow: hidden; border: 0; }
.uv::after { content: ""; position: absolute; inset: 0; border: 1.5px solid #484848; border-right-color: #5a5a5a; border-radius: 10px 10px 0 0; pointer-events: none; }
.uvcanvas { position: absolute; left: 0; top: 0; width: 1279px; height: 811px; }
.uvface { fill: rgb(208,120,64); fill-opacity: .5; stroke: none; }
.edge-dark { fill: none; stroke: #241a10; stroke-width: 4.6; }
.edge-orange { fill: none; stroke: #f08b2d; stroke-width: 2.6; }
.uvverts { fill: none; stroke: #f08b2d; stroke-width: 8; stroke-linecap: round; }
.uvhdr { height: 46px; padding: 5px 0 0 16px; background: transparent; }
.uvhdr .grp { height: 39px; }
.uvhdr .cell { height: 39px; }
.uvview { margin-left: 26px; line-height: 40px; color: #e2e2e2; text-shadow: 0 1px 2px #000; }
.uvright { display: flex; margin-left: auto; }
.newb { width: 118px; justify-content: flex-start; padding: 0 0 0 11px; gap: 22px; }
.plus { width: 20px; height: 20px; fill: none; stroke: #e6e6e6; stroke-width: 2; }

/* right panel */
.rpanel { display: flex; flex-direction: column; gap: 11px; overflow: hidden; }
.rp-top { position: relative; height: 278px; background: #1a1a1a; border-radius: 10px 0 0 10px; box-shadow: inset 1px 0 0 #333; overflow: hidden; }
.rp-head { height: 44px; background: #2d2d2d; }
.rp-head.tall { height: 50px; }
.rp-dot { position: absolute; right: -2px; top: 187px; width: 6px; height: 6px; border-radius: 50%; background: #ddd; }
.rp-sel { position: absolute; left: 0; right: 0; top: 214px; height: 39px; background: #44619e; padding: 4px 0 0 7px; }
.rp-ic { width: 19px; height: 30px; }
.rp-bottom { position: relative; flex: 1; background: #1a1a1a; border-radius: 10px 0 0 0; box-shadow: inset 1px 0 0 #333; overflow: hidden; }
.rp-marks { position: absolute; left: 0; top: 0; width: 19px; height: 1252px; }

/* popup menu */
.menu { position: absolute; left: 518px; top: 367px; width: 383px; height: 702px; background: #181818; border: 1px solid #2a2a2a; border-radius: 7px; }
.m-title { height: 54px; padding: 4px 0 0 16px; line-height: 50px; color: #8e8e8e; text-shadow: 0 1px 2px #000; }
.m-sep { height: 2px; margin: 6px 14px; background: #2e2e2e; }
.m-sep.first { margin-top: 0; }
.m-item { position: relative; height: 40px; padding-left: 65px; line-height: 43px; color: #dcdcdc; white-space: nowrap; overflow: hidden; text-shadow: 0 1px 2px #000; }
.m-item u { text-underline-offset: 3px; text-decoration-thickness: 1.5px; }
.m-item.hot { height: 36px; margin: 2px 11px 3px 7px; padding-left: 58px; line-height: 39px; background: #424242; border-radius: 6px 0 0 6px; color: #f0f0f0; }
.m-mark { position: absolute; left: 1px; top: 56px; width: 375px; height: 53px; border: 5px solid #e8431f; }
.tip { position: absolute; left: 767px; top: 487px; width: 498px; height: 60px; padding-left: 24px; line-height: 60px; background: #1c1c1c; border: 1px solid #262626; border-radius: 7px; color: #dcdcdc; white-space: nowrap; }
```
